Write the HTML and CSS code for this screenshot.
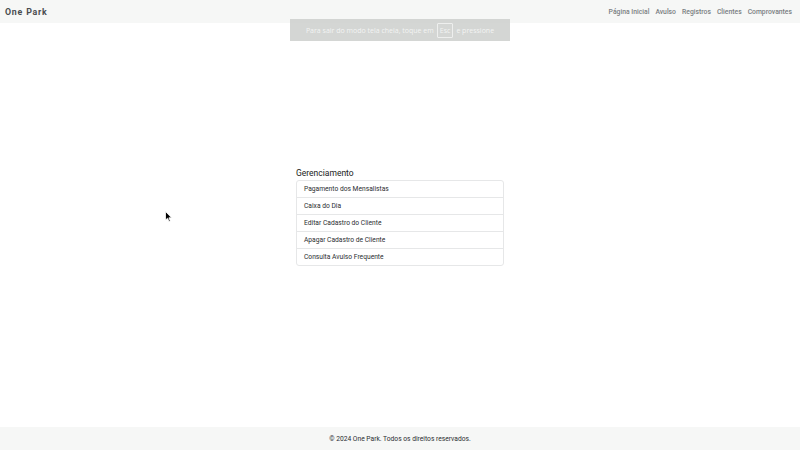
FILE: index.html
```html
<!DOCTYPE html>
<html lang="pt-BR">
<head>
<meta charset="utf-8">
<title>One Park</title>
<link rel="stylesheet" href="styles.css">
</head>
<body>
<header class="navbar">
  <a class="brand" href="#">One Park</a>
  <nav class="nav">
    <a href="#">Página Inicial</a>
    <a href="#">Avulso</a>
    <a href="#">Registros</a>
    <a href="#">Clientes</a>
    <a href="#">Comprovantes</a>
  </nav>
</header>
<main class="main">
  <section class="panel">
    <h5 class="title">Gerenciamento</h5>
    <ul class="list">
      <li class="item">Pagamento dos Mensalistas</li>
      <li class="item">Caixa do Dia</li>
      <li class="item">Editar Cadastro do Cliente</li>
      <li class="item">Apagar Cadastro de Cliente</li>
      <li class="item">Consulta Avulso Frequente</li>
    </ul>
  </section>
</main>
<footer class="footer">© 2024 One Park. Todos os direitos reservados.</footer>
<div class="toast">Para sair do modo tela cheia, toque em <span class="key">Esc</span> e pressione</div>
<svg class="cursor" width="8" height="12" viewBox="0 0 8 12"><path d="M0.5 0.5 L0.5 9 L2.6 7.2 L4 10.6 L5.3 10 L3.9 6.8 L6.6 6.8 Z" fill="#000" stroke="#fff" stroke-width="0.8"/></svg>
</body>
</html>
```
FILE: styles.css
```css
* { box-sizing: border-box; }
html, body { margin: 0; padding: 0; }
body {
  font-family: Roboto, "Liberation Sans", sans-serif;
  background: #fff;
  color: #212529;
  min-height: 450px;
  height: 450px;
  display: flex;
  flex-direction: column;
  position: relative;
  overflow: hidden;
}
.navbar {
  height: 23px;
  background: #f6f7f6;
  display: flex;
  align-items: center;
  justify-content: space-between;
  padding: 0 8px 0 5px;
}
.brand {
  font-size: 8.8px;
  font-weight: 700;
  letter-spacing: 0.8px;
  color: #4a4d50;
  text-decoration: none;
}
.nav { display: flex; gap: 6px; }
.nav a {
  font-size: 6.8px;
  font-weight: 500;
  color: #7a7e82;
  text-decoration: none;
}
.main {
  flex: 1;
  display: flex;
  justify-content: center;
  padding-top: 145px;
}
.panel { width: 208px; }
.title {
  margin: 0 0 1px;
  font-size: 8.5px;
  font-weight: 400;
  color: #222;
  line-height: 11px;
}
.list {
  list-style: none;
  margin: 0;
  padding: 0;
  border: 1px solid #e6e7e8;
  border-radius: 3px;
}
.item {
  height: 17px;
  line-height: 16px;
  font-size: 6.7px;
  color: #2b2e31;
  padding: 0 7px;
  border-top: 1px solid #e6e7e8;
}
.item:first-child { border-top: 0; height: 16px; }
.footer {
  height: 23px;
  background: #f6f7f6;
  display: flex;
  align-items: center;
  justify-content: center;
  font-size: 6.7px;
  color: #2b2e31;
}
.toast {
  position: absolute;
  left: 290px;
  top: 19px;
  width: 220px;
  height: 22px;
  background: rgba(205, 207, 205, 0.85);
  color: #f3f4f3;
  font-family: "Open Sans", "DejaVu Sans", sans-serif;
  font-size: 7px;
  display: flex;
  align-items: center;
  justify-content: center;
  gap: 3px;
}
.key {
  border: 1px solid #eeefee;
  border-radius: 1px;
  padding: 2px 2px;
  line-height: 9px;
}
.cursor {
  position: absolute;
  left: 165px;
  top: 211px;
}
```
